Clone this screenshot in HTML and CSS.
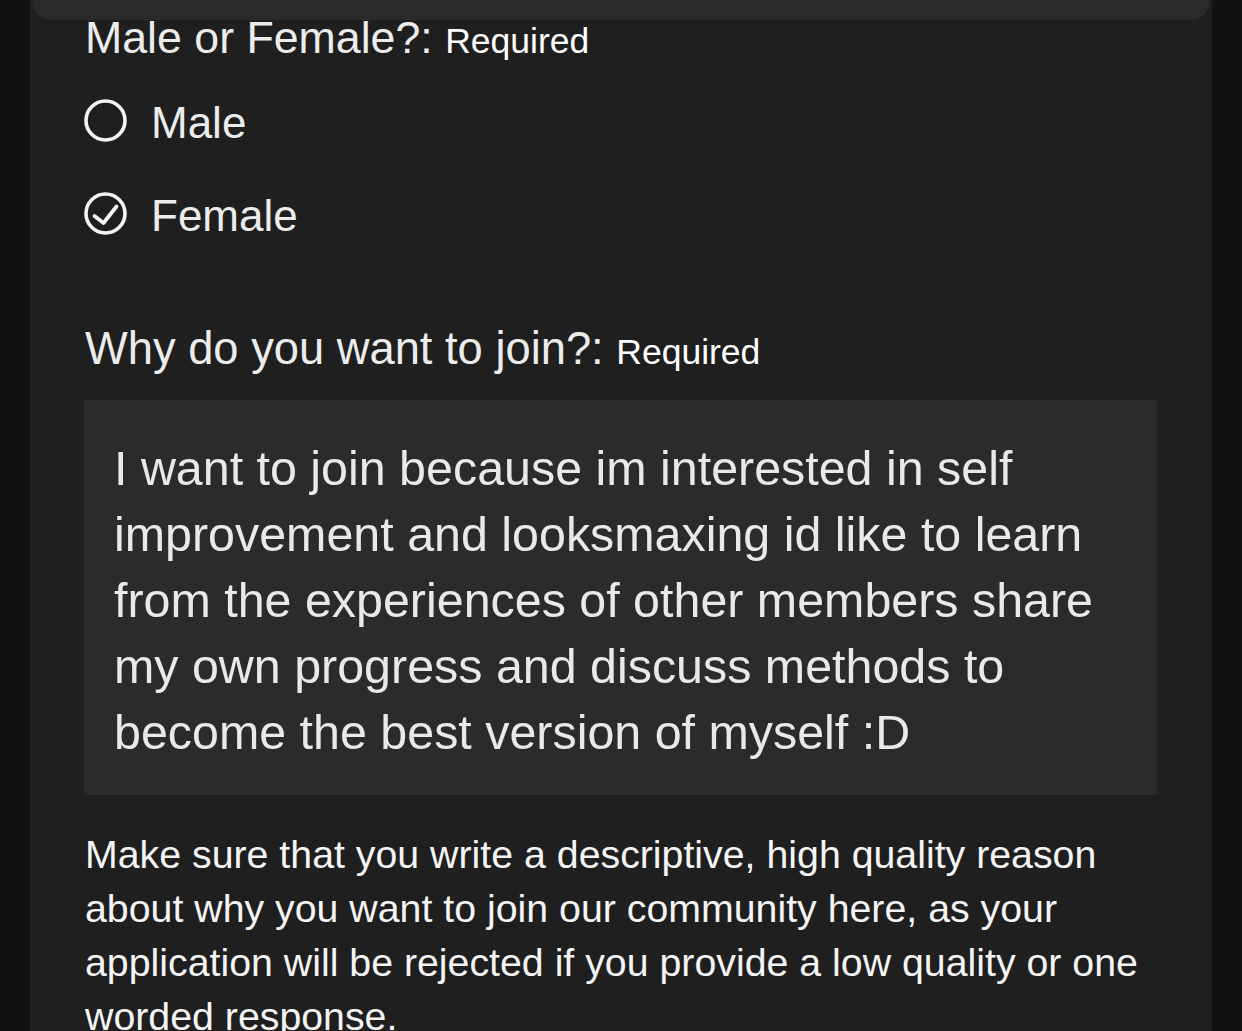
FILE: index.html
```html
<!DOCTYPE html>
<html lang="en">
<head>
<meta charset="utf-8">
<title>Application</title>
<link rel="stylesheet" href="styles.css">
</head>
<body>
<div class="panel">
  <div class="card"></div>
  <div class="content">
    <div class="label label-1">Male or Female?: <span class="req">Required</span></div>
    <div class="options">
      <div class="option">
        <svg class="radio" viewBox="0 0 43 43" width="43" height="43"><circle cx="21.5" cy="21.5" r="19.5" fill="none" stroke="#f4f4f4" stroke-width="3.6"/></svg>
        <span class="opt-text">Male</span>
      </div>
      <div class="option">
        <svg class="radio" viewBox="0 0 43 43" width="43" height="43"><circle cx="21.5" cy="21.5" r="19.5" fill="none" stroke="#f4f4f4" stroke-width="3.6"/><path d="M10.5 24 L19.5 31 L32.5 14.5" fill="none" stroke="#f4f4f4" stroke-width="3.8" stroke-linecap="round" stroke-linejoin="round"/></svg>
        <span class="opt-text">Female</span>
      </div>
    </div>
    <div class="label label-2">Why do you want to join?: <span class="req">Required</span></div>
    <div class="answer">I want to join because im interested in self<br>improvement and looksmaxing id like to learn<br>from the experiences of other members share<br>my own progress and discuss methods to<br>become the best version of myself :D</div>
    <p class="hint">Make sure that you write a descriptive, high quality reason<br>about why you want to join our community here, as your<br>application will be rejected if you provide a low quality or one<br>worded response.</p>
  </div>
</div>
</body>
</html>
```

FILE: styles.css
```css
html, body {
  margin: 0;
  padding: 0;
  background: #111111;
  height: 100%;
  overflow: hidden;
}

body {
  font-family: "Liberation Sans", Arial, Helvetica, sans-serif;
  color: #ececec;
}

.panel {
  margin-left: 30px;
  width: 1182px;
  min-height: 1031px;
  background: #1f1f1f;
}

.card {
  height: 20px;
  margin: 0 2px 0 2px;
  background: #2a2a2a;
  border-radius: 0 0 30px 30px;
}

.content {
  padding-left: 55px;
}

.label {
  margin: 0;
  color: #ececec;
  white-space: nowrap;
}

.label-1 {
  font-size: 44.7px;
  line-height: 38px;
  margin-top: -1px;
}

.label-2 {
  font-size: 45.3px;
  line-height: 50px;
  margin-top: 89px;
}

.req {
  font-size: 35.5px;
  color: #ffffff;
}

.options {
  display: flex;
  flex-direction: column;
  gap: 50px;
  margin-top: 39px;
  margin-left: -1px;
}

.option {
  display: flex;
  align-items: center;
  gap: 24px;
  height: 43px;
}

.radio {
  display: block;
  flex: none;
}

.opt-text {
  font-size: 44px;
  line-height: 43px;
  padding-top: 3px;
  color: #ececec;
}

.answer {
  margin: 23px 0 0 -1px;
  width: 1073px;
  box-sizing: border-box;
  padding: 35px 10px 30px 30px;
  background: #2b2b2b;
  font-size: 48.4px;
  line-height: 66px;
  color: #e9e9e9;
  white-space: nowrap;
}

.hint {
  margin: 32px 0 0 0;
  font-size: 39.3px;
  line-height: 54px;
  color: #f4f4f4;
  white-space: nowrap;
}
```
